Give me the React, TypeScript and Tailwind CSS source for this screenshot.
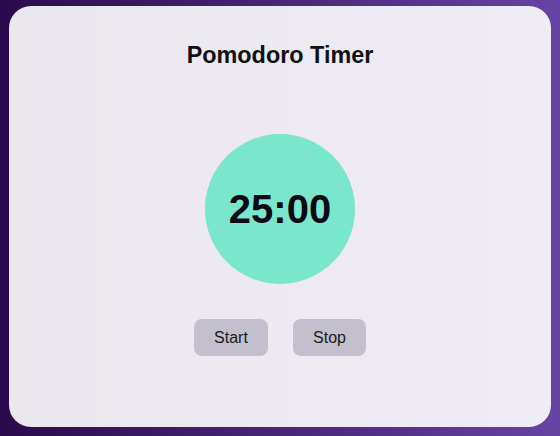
export default function App() {
  return (
    <div
      className="min-h-screen w-full bg-gradient-to-r from-[#2a0a4c] to-[#6743a4] pt-[6px] pb-[9px] px-[9px]"
      style={{ fontFamily: '"Liberation Sans", Arial, sans-serif' }}
    >
      <div className="h-[421px] rounded-[22px] bg-white/90 flex flex-col items-center pt-[36px]">
        <h1 className="text-[23.4px] leading-[26px] font-bold text-[#111]">Pomodoro Timer</h1>

        <div className="mt-[66px] w-[150px] h-[150px] rounded-full bg-[#7ae6cc] flex items-center justify-center">
          <span className="text-[40px] font-bold text-[#0d0a14]">25:00</span>
        </div>

        <div className="mt-[35px] flex gap-[25px]">
          <button className="w-[74px] h-[37px] rounded-[8px] bg-[#c3bfcc] text-[16px] text-[#1a1a1a]">
            Start
          </button>
          <button className="w-[73px] h-[37px] rounded-[8px] bg-[#c3bfcc] text-[16px] text-[#1a1a1a]">
            Stop
          </button>
        </div>
      </div>
    </div>
  );
}
